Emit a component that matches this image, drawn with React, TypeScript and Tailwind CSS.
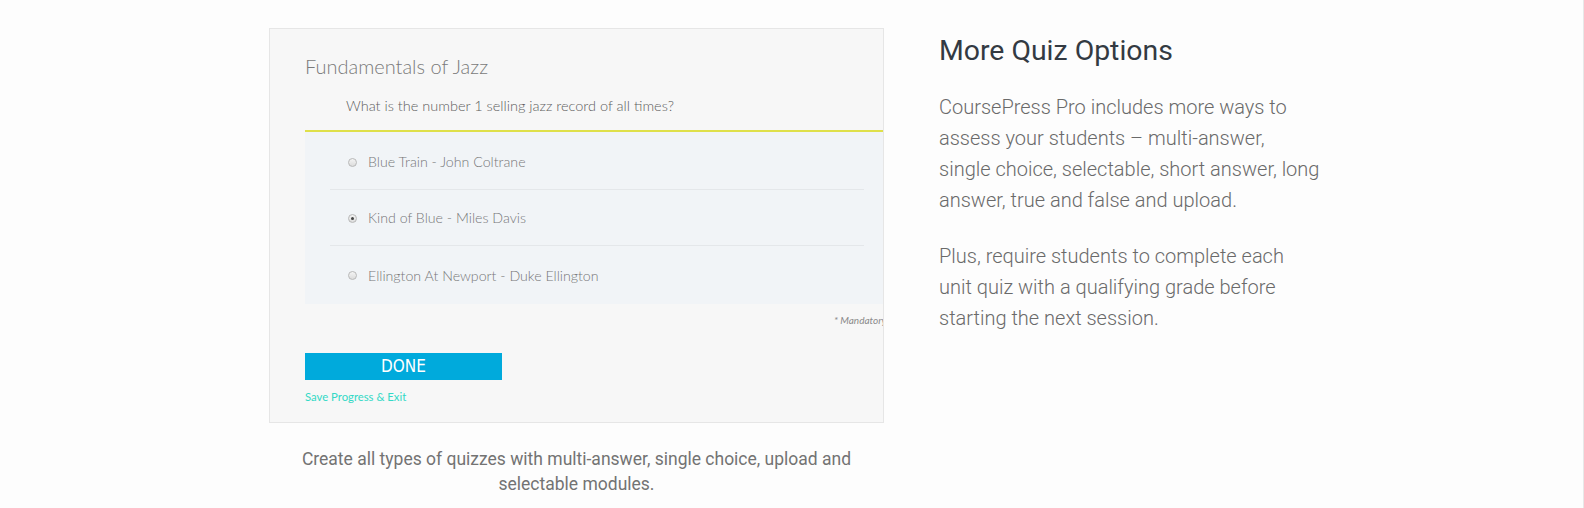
const options = [
  { label: 'Blue Train - John Coltrane', checked: false },
  { label: 'Kind of Blue - Miles Davis', checked: true },
  { label: 'Ellington At Newport - Duke Ellington', checked: false },
];

function Radio({ checked }: { checked: boolean }) {
  return (
    <span className="w-[9px] h-[9px] rounded-full border border-[#b8b8b8] bg-gradient-to-b from-[#f4f4f4] to-[#dcdcdc] flex items-center justify-center shrink-0">
      {checked && <span className="w-[3px] h-[3px] rounded-full bg-[#444]" />}
    </span>
  );
}

function QuizScreenshot() {
  return (
    <div className="w-[615px] h-[395px] bg-[#f7f7f7] border border-[#e6e6e6] pl-[35px] overflow-hidden font-['Lato',sans-serif]">
      <h3 className="mt-[24px] text-[20px] leading-[26px] font-light text-[#7a7a7a]">
        Fundamentals of Jazz
      </h3>
      <p className="mt-[18px] ml-[41px] text-[14.5px] leading-[18px] font-light text-[#5e5e5e]">
        What is the number 1 selling jazz record of all times?
      </p>
      <div className="mt-[15px] border-t-2 border-[#dfe04a] bg-[#f1f4f7]">
        {options.map((opt, i) => (
          <div
            key={opt.label}
            className={`ml-[25px] mr-[19px] flex items-center gap-[11px] pl-[18px] ${
              i === 0 ? 'h-[58px] pt-[3px]' : 'h-[56px] pt-[1px]'
            } ${i < options.length - 1 ? 'border-b border-[#e4e7ea]' : 'h-[58px]'}`}
          >
            <Radio checked={opt.checked} />
            <span className="text-[14.2px] font-light text-[#777]">{opt.label}</span>
          </div>
        ))}
      </div>
      <div className="mt-[9px] pl-[529px] whitespace-nowrap text-[10px] italic text-[#8a8a8a]">
        * Mandatory
      </div>
      <button className="mt-[25px] w-[197px] h-[27px] bg-[#00aadc] text-white text-[17px] leading-none font-['DejaVu_Sans_Condensed','DejaVu_Sans',sans-serif] font-stretch-condensed flex items-center justify-center">
        DONE
      </button>
      <a className="block mt-[9px] text-[11.3px] text-[#33d9c6]">Save Progress &amp; Exit</a>
    </div>
  );
}

export default function App() {
  return (
    <div className="w-[1584px] h-[508px] bg-[#fdfdfd] border-r border-[#e8e8e8] overflow-hidden font-['Roboto',sans-serif]">
      <section className="pl-[269px] pt-[28px] flex gap-[55px]">
        <div className="flex flex-col items-center">
          <QuizScreenshot />
          <p className="mt-[24px] w-[580px] text-center text-[17.5px] leading-[25px] text-[#737373]">
            Create all types of quizzes with multi-answer, single choice, upload and selectable modules.
          </p>
        </div>

        <div className="w-[392px] pt-[5px]">
          <h2 className="text-[28.4px] leading-[36px] text-[#333a42]">More Quiz Options</h2>
          <p className="mt-[23px] text-[20px] leading-[31px] font-light text-[#6a6a6a]">
            CoursePress Pro includes more ways to
            <br />
            assess your students – multi-answer,
            <br />
            single choice, selectable, short answer, long
            <br />
            answer, true and false and upload.
          </p>
          <p className="mt-[25px] text-[20px] leading-[31px] font-light text-[#6a6a6a]">
            Plus, require students to complete each
            <br />
            unit quiz with a qualifying grade before
            <br />
            starting the next session.
          </p>
        </div>
      </section>
    </div>
  );
}
